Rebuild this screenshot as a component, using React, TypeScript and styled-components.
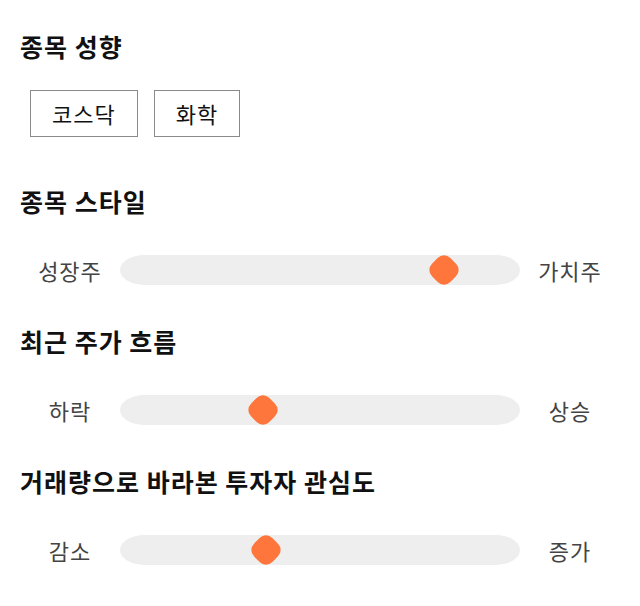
import { createGlobalStyle } from "styled-components"
import styled from "styled-components"

const GlobalStyle = createGlobalStyle`
  html, body {
    margin: 0;
    padding: 0;
    background: #ffffff;
    font-family: "Noto Sans CJK KR", "Noto Sans", sans-serif;
  }
`

const Main = styled.div`
  display: flex;
  flex-direction: column;
  width: 600px;
  padding: 29px 20px 0 20px;
`

const Title = styled.h2`
  margin: 0;
  font-size: 25px;
  line-height: 34px;
  font-weight: 700;
  color: #111;
  letter-spacing: 1px;
`

const Section = styled.section<{ last?: boolean }>`
  display: flex;
  flex-direction: column;
  margin-bottom: ${props => props.last ? "0" : "39px"};
`

const ChipRow = styled.div`
  display: flex;
  gap: 16px;
  margin: 27px 0 8px 10px;
`

const Chip = styled.button`
  height: 47px;
  padding: 0 21px;
  border: solid 1px #8a8a8a;
  background: #fff;
  color: #111;
  font-family: inherit;
  font-size: 22px;
  letter-spacing: 1px;
  line-height: 45px;
  cursor: pointer;
`

const SliderRow = styled.div`
  display: grid;
  grid-template-columns: 100px 1fr 100px;
  align-items: center;
  margin-top: 37px;
  height: 30px;
`

const Label = styled.div`
  text-align: center;
  font-size: 22px;
  letter-spacing: 1px;
  color: #444;
  line-height: 30px;
`

const Track = styled.div`
  position: relative;
  height: 30px;
  background: #eeeeee;
  border-radius: 24px / 15px;
`

const Thumb = styled.div`
  position: absolute;
  top: 50%;
  width: 26px;
  height: 26px;
  margin-left: -13px;
  margin-top: -13px;
  border-radius: 9px;
  background: #ff763d;
  transform: rotate(45deg);
`

const Slider = ({ left, right, value }: { left: string; right: string; value: number }) => {
  // thumb centre runs from 15px to (width - 15px)
  const pos = `calc(15px + (100% - 30px) * ${value / 100})`
  return (
    <SliderRow>
      <Label>{left}</Label>
      <Track>
        <Thumb style={{ left: pos }} />
      </Track>
      <Label>{right}</Label>
    </SliderRow>
  )
}

export default function App() {
  return (
    <>
      <GlobalStyle />
      <Main>
        <Section>
          <Title>종목 성향</Title>
          <ChipRow>
            <Chip>코스닥</Chip>
            <Chip>화학</Chip>
          </ChipRow>
        </Section>
        <Section>
          <Title>종목 스타일</Title>
          <Slider left="성장주" right="가치주" value={83.5} />
        </Section>
        <Section>
          <Title>최근 주가 흐름</Title>
          <Slider left="하락" right="상승" value={34.5} />
        </Section>
        <Section last>
          <Title>거래량으로 바라본 투자자 관심도</Title>
          <Slider left="감소" right="증가" value={35.5} />
        </Section>
      </Main>
    </>
  )
}
